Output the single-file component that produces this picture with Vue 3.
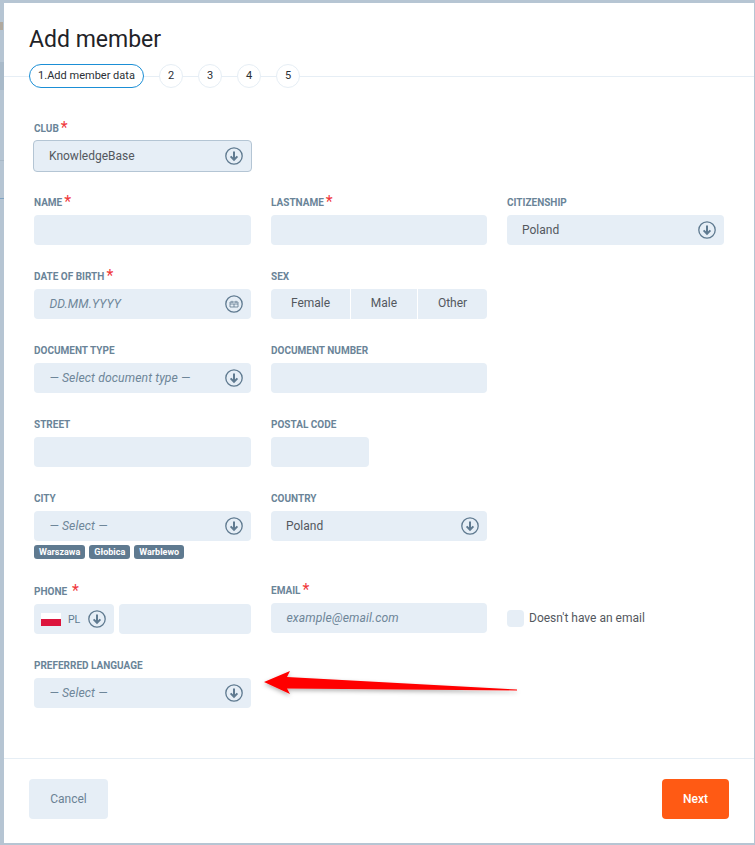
<script setup>
const steps = ['2', '3', '4', '5']
const tags = ['Warszawa', 'Głobica', 'Warblewo']
const sexes = ['Female', 'Male', 'Other']
</script>

<template>
  <div class="page">
    <div class="modal">
      <h1 class="title">Add member</h1>
      <div class="stepper">
        <span class="step active">1.Add member data</span>
        <span v-for="s in steps" :key="s" class="step">{{ s }}</span>
      </div>

      <form class="form">
        <div class="row club">
          <div class="field">
            <label class="lbl">CLUB<i class="req">*</i></label>
            <div class="input select bordered">
              <span class="val">KnowledgeBase</span>
              <svg class="ico" viewBox="0 0 18 18"><circle cx="9" cy="9" r="8.2" /><path d="M9 4.5v8M5.6 9.4 9 12.8l3.4-3.4" /></svg>
            </div>
          </div>
        </div>

        <div class="row">
          <div class="field">
            <label class="lbl">NAME<i class="req">*</i></label>
            <div class="input"></div>
          </div>
          <div class="field">
            <label class="lbl">LASTNAME<i class="req">*</i></label>
            <div class="input"></div>
          </div>
          <div class="field">
            <label class="lbl">CITIZENSHIP</label>
            <div class="input select">
              <span class="val">Poland</span>
              <svg class="ico" viewBox="0 0 18 18"><circle cx="9" cy="9" r="8.2" /><path d="M9 4.5v8M5.6 9.4 9 12.8l3.4-3.4" /></svg>
            </div>
          </div>
        </div>

        <div class="row">
          <div class="field">
            <label class="lbl">DATE OF BIRTH<i class="req">*</i></label>
            <div class="input select">
              <span class="ph">DD.MM.YYYY</span>
              <svg class="ico" viewBox="0 0 18 18"><circle cx="9" cy="9" r="8.2" /><path class="thin" d="M5 7h8v5H5zM5 9h8M7 5.8V8M11 5.8V8M9 9v3" /></svg>
            </div>
          </div>
          <div class="field">
            <label class="lbl">SEX</label>
            <div class="seg">
              <span v-for="s in sexes" :key="s" class="seg-item">{{ s }}</span>
            </div>
          </div>
        </div>

        <div class="row">
          <div class="field">
            <label class="lbl">DOCUMENT TYPE</label>
            <div class="input select">
              <span class="ph">— Select document type —</span>
              <svg class="ico" viewBox="0 0 18 18"><circle cx="9" cy="9" r="8.2" /><path d="M9 4.5v8M5.6 9.4 9 12.8l3.4-3.4" /></svg>
            </div>
          </div>
          <div class="field">
            <label class="lbl">DOCUMENT NUMBER</label>
            <div class="input"></div>
          </div>
        </div>

        <div class="row">
          <div class="field">
            <label class="lbl">STREET</label>
            <div class="input"></div>
          </div>
          <div class="field">
            <label class="lbl">POSTAL CODE</label>
            <div class="input postal"></div>
          </div>
        </div>

        <div class="row city">
          <div class="field">
            <label class="lbl">CITY</label>
            <div class="input select">
              <span class="ph">— Select —</span>
              <svg class="ico" viewBox="0 0 18 18"><circle cx="9" cy="9" r="8.2" /><path d="M9 4.5v8M5.6 9.4 9 12.8l3.4-3.4" /></svg>
            </div>
            <div class="tags">
              <span v-for="t in tags" :key="t" class="tag">{{ t }}</span>
            </div>
          </div>
          <div class="field">
            <label class="lbl">COUNTRY</label>
            <div class="input select">
              <span class="val">Poland</span>
              <svg class="ico" viewBox="0 0 18 18"><circle cx="9" cy="9" r="8.2" /><path d="M9 4.5v8M5.6 9.4 9 12.8l3.4-3.4" /></svg>
            </div>
          </div>
        </div>

        <div class="row phone-row">
          <div class="field">
            <label class="lbl phone-lbl">PHONE<i class="req spaced">*</i></label>
            <div class="phone">
              <div class="input prefix">
                <span class="flag"></span>
                <span class="pl">PL</span>
                <svg class="ico" viewBox="0 0 18 18"><circle cx="9" cy="9" r="8.2" /><path d="M9 4.5v8M5.6 9.4 9 12.8l3.4-3.4" /></svg>
              </div>
              <div class="input grow"></div>
            </div>
          </div>
          <div class="field email">
            <label class="lbl">EMAIL<i class="req">*</i></label>
            <div class="input"><span class="ph">example@email.com</span></div>
          </div>
          <div class="field check-field">
            <span class="box"></span>
            <span class="check-text">Doesn't have an email</span>
          </div>
        </div>

        <div class="row last">
          <div class="field">
            <label class="lbl">PREFERRED LANGUAGE</label>
            <div class="input select">
              <span class="ph">— Select —</span>
              <svg class="ico" viewBox="0 0 18 18"><circle cx="9" cy="9" r="8.2" /><path d="M9 4.5v8M5.6 9.4 9 12.8l3.4-3.4" /></svg>
            </div>
          </div>
        </div>
      </form>

      <div class="footer">
        <button type="button" class="btn cancel">Cancel</button>
        <button type="button" class="btn next">Next</button>
      </div>

      <svg class="arrow" viewBox="0 0 270 40" width="270" height="40">
        <defs>
          <filter id="sh" x="-5%" y="-40%" width="110%" height="200%">
            <feDropShadow dx="0" dy="2" stdDeviation="2" flood-color="#000" flood-opacity="0.3" />
          </filter>
        </defs>
        <path filter="url(#sh)" fill="#ff0000" d="M4 12 30 1 27 7 257 19.5 257 20.5 27 18.5 30 24Z" />
      </svg>
    </div>
  </div>
</template>

<style>
html, body { margin: 0; background: #b6c5d3; overflow: hidden; }
</style>

<style scoped>
.page {
  width: 755px;
  height: 845px;
  box-sizing: border-box;
  padding: 3px 1px 2px 4px;
  background-color: #b6c5d3;
  background-image:
    linear-gradient(#a9bac9, #a9bac9),
    linear-gradient(#b0a99f, #b0a99f),
    linear-gradient(#7fa3c2, #7fa3c2),
    linear-gradient(#a8b8c6, #a8b8c6);
  background-size: 4px 28px, 3px 8px, 4px 1px, 4px 1px;
  background-position: 0 62px, 0 22px, 0 198px, 0 160px;
  background-repeat: no-repeat;
  font-family: Roboto, "Liberation Sans", sans-serif;
}
.modal {
  position: relative;
  height: 100%;
  background: #fff;
  display: flex;
  flex-direction: column;
}
.title {
  margin: 21px 0 0 25px;
  font-size: 23px;
  line-height: 30px;
  font-weight: 400;
  color: #1f2328;
  padding-top: 1px;
  height: 29px;
}
.stepper {
  position: relative;
  display: flex;
  gap: 15px;
  margin: 10px 0 0 25px;
  height: 24px;
}
.stepper::before {
  content: "";
  position: absolute;
  left: -25px;
  right: 0;
  top: 12px;
  height: 1px;
  background: #e6eef5;
}
.step {
  position: relative;
  box-sizing: border-box;
  width: 24px;
  height: 24px;
  border: 1px solid #e6eef5;
  border-radius: 12px;
  background: #fff;
  font-size: 11px;
  line-height: 22px;
  text-align: center;
  color: #2a2f35;
  white-space: nowrap;
}
.step.active {
  width: 115px;
  border-color: #1b8fd6;
}
.form {
  padding: 0 30px;
  flex: 1;
}
.row {
  display: grid;
  grid-template-columns: 217px 216px 217px;
  column-gap: 20px;
  height: 74px;
}
.club { margin-top: 30px; }
.city { height: 92px; }
.phone-row { height: 75px; }
.field { display: flex; flex-direction: column; }
.lbl {
  height: 18px;
  margin-bottom: 5px;
  font-size: 10px;
  line-height: 22px;
  font-weight: 700;
  color: #6a8498;
  white-space: nowrap;
}
.req {
  font-style: normal;
  font-weight: 400;
  font-size: 16px;
  line-height: 10px;
  vertical-align: -1px;
  color: #f0383c;
  margin-left: 2px;
}
.req.spaced { margin-left: 5px; }
.input {
  box-sizing: border-box;
  height: 30px;
  border-radius: 4px;
  background: #e6eef6;
  display: flex;
  align-items: center;
  padding: 0 15px;
}
.select { justify-content: space-between; padding-right: 8px; }
.bordered {
  height: 32px;
  margin: -1px;
  border: 1px solid #b4c5d4;
}
.val, .seg-item, .check-text {
  font-size: 12px;
  color: #53585e;
}
.ph {
  font-size: 12.2px;
  font-style: italic;
  color: #6e8699;
  letter-spacing: 0.1px;
  margin-left: 0.5px;
}
.ico {
  flex: none;
  width: 18px;
  height: 18px;
  fill: none;
  stroke: #5f7a90;
  stroke-width: 1.3;
}
.ico path { stroke-width: 2; }
.ico path.thin { stroke-width: 0.8; }
.seg {
  display: grid;
  grid-template-columns: 79px 66px 1fr;
  column-gap: 1px;
  height: 30px;
  border-radius: 4px;
  overflow: hidden;
}
.seg-item {
  background: #e6eef6;
  display: flex;
  align-items: center;
  justify-content: center;
  padding-bottom: 2px;
  box-sizing: border-box;
}
.postal { width: 98px; }
.tags { display: flex; gap: 4px; margin-top: 4px; }
.tag {
  height: 14px;
  padding: 0 5px;
  border-radius: 3px;
  background: #5f7a90;
  color: #fff;
  font-size: 9px;
  font-weight: 700;
  line-height: 14px;
}
.phone { display: flex; gap: 5px; }
.phone-lbl { height: 19px; line-height: 24px; }
.prefix { width: 80px; flex: none; padding: 0 8px 0 7px; }
.grow { flex: 1; }
.flag {
  width: 20px;
  height: 13px;
  background: linear-gradient(#fff 50%, #dc143c 50%);
  flex: none;
}
.pl { font-size: 10.5px; color: #5f7a90; margin: 0 8px 0 7px; }
.check-field {
  flex-direction: row;
  align-items: center;
  gap: 5px;
  height: 30px;
  margin-top: 23px;
}
.box {
  width: 17px;
  height: 17px;
  border-radius: 4px;
  background: #e6eef6;
}
.footer {
  display: flex;
  justify-content: space-between;
  padding: 20px 25px 24px;
  border-top: 1px solid #e6eef5;
}
.btn {
  height: 40px;
  border: 0;
  border-radius: 4px;
  font-family: inherit;
  font-size: 12px;
}
.cancel { width: 79px; background: #e6eef6; color: #6b8295; }
.next { width: 67px; background: #ff5a14; color: #fff; font-weight: 500; }
.arrow {
  position: absolute;
  left: 256px;
  top: 667px;
  pointer-events: none;
}
</style>
